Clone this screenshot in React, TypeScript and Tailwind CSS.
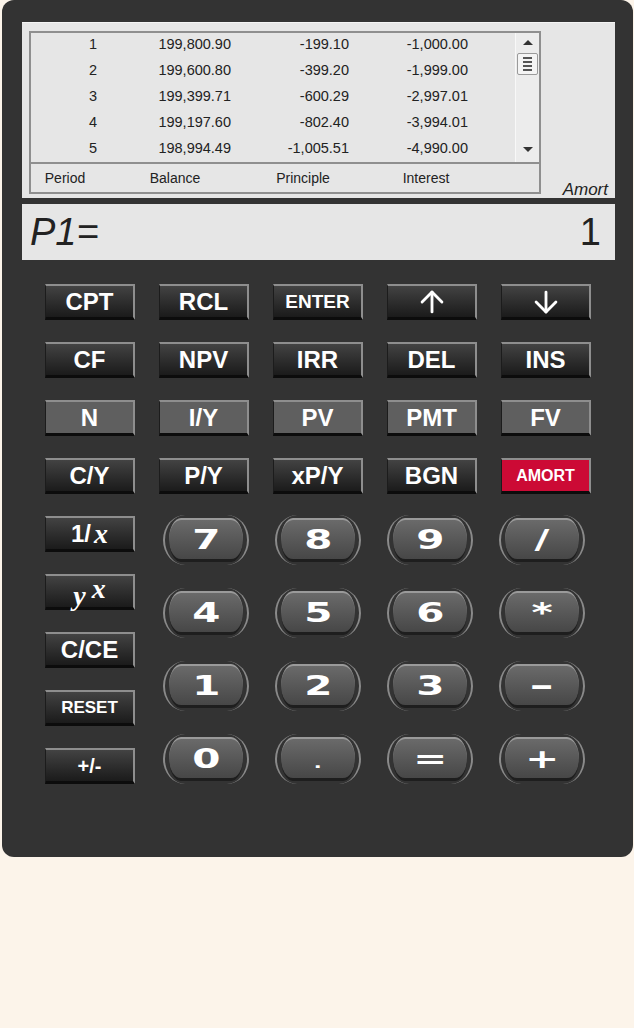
import { ArrowUp, ArrowDown } from 'lucide-react';
import type { ReactNode } from 'react';

const rows = [
  ['1', '199,800.90', '-199.10', '-1,000.00'],
  ['2', '199,600.80', '-399.20', '-1,999.00'],
  ['3', '199,399.71', '-600.29', '-2,997.01'],
  ['4', '199,197.60', '-802.40', '-3,994.01'],
  ['5', '198,994.49', '-1,005.51', '-4,990.00'],
];

type Variant = 'dark' | 'gray' | 'red';

function Key({ children, variant = 'dark', size = 'text-[24px]' }: { children: ReactNode; variant?: Variant; size?: string }) {
  const bg =
    variant === 'gray'
      ? 'bg-[#5f5f5f]'
      : variant === 'red'
        ? 'bg-[#cc0a35]'
        : 'bg-linear-to-b from-[#434343] to-[#1b1b1b]';
  return (
    <div
      className={`h-[36px] w-[90px] flex items-center justify-center text-white font-bold leading-none border-t-2 border-r-2 border-t-[#8e8e8e] border-r-[#8e8e8e] border-b-[3px] border-b-[#0c0c0c] border-l border-l-[#1c1c1c] ${bg} ${size}`}
    >
      {children}
    </div>
  );
}

function NumKey({ children }: { children: ReactNode }) {
  return (
    <div className="h-[50px] w-[86px] rounded-[22px/50%] border-x-2 border-x-[#8a8a8a] px-[4px] py-[3px] flex">
      <div className="flex-1 rounded-[12px/50%] border-t-2 border-t-[#9a9a9a] border-b-[3px] border-b-[#1e1e1e] bg-linear-to-b from-[#6a6a6a] to-[#474747] flex items-center justify-center">
        <span className="text-white font-bold text-[27px] leading-none scale-x-150 [font-family:'DejaVu_Sans',sans-serif]">
          {children}
        </span>
      </div>
    </div>
  );
}

export default function App() {
  return (
    <div className="min-h-[1028px] bg-[#fcf4ea] [font-family:'Liberation_Sans',Arial,sans-serif]">
      <div className="ml-[2px] w-[631px] h-[857px] bg-[#333333] rounded-[12px] pt-[22px]">
        {/* amortization panel */}
        <div className="ml-[20px] w-[593px] h-[176px] bg-[#e6e6e6] border-t border-t-[#f4f4f4] pl-[7px] pt-[8px] flex items-start">
          <div className="w-[512px] h-[163px] border-2 border-[#8f8f8f] flex flex-col text-[14.5px] text-[#222]">
            <div className="flex h-[131px] border-b-2 border-b-[#8f8f8f]">
              <div className="flex-1 -mt-[1px]">
                {rows.map((r) => (
                  <div key={r[0]} className="flex h-[26px] items-center">
                    <span className="w-[66px] text-right">{r[0]}</span>
                    <span className="w-[134px] text-right">{r[1]}</span>
                    <span className="w-[118px] text-right">{r[2]}</span>
                    <span className="w-[119px] text-right">{r[3]}</span>
                  </div>
                ))}
              </div>
              <div className="w-[24px] bg-[#ececec] border-l border-l-[#f8f8f8] flex flex-col items-center justify-between pt-[7px] pb-[10px]">
                <div className="flex flex-col items-center gap-[8px]">
                  <div className="w-0 h-0 border-x-[5px] border-x-transparent border-b-[5px] border-b-[#333]" />
                  <div className="w-[21px] h-[22px] border border-[#9a9a9a] bg-[#f4f4f4] rounded-[2px] flex flex-col items-center justify-center gap-[2px]">
                    <div className="w-[9px] h-[2px] bg-[#555]" />
                    <div className="w-[9px] h-[2px] bg-[#555]" />
                    <div className="w-[9px] h-[2px] bg-[#555]" />
                    <div className="w-[9px] h-[2px] bg-[#555]" />
                  </div>
                </div>
                <div className="w-0 h-0 border-x-[5px] border-x-transparent border-t-[5px] border-t-[#333]" />
              </div>
            </div>
            <div className="flex h-[28px] items-center text-[14px]">
              <span className="w-[68px] text-center">Period</span>
              <span className="w-[152px] text-center">Balance</span>
              <span className="w-[104px] text-center">Principle</span>
              <span className="w-[142px] text-center">Interest</span>
            </div>
          </div>
          <span className="self-end ml-auto mr-[7px] mb-[-4px] italic text-[17px] text-[#222]">Amort</span>
        </div>

        {/* display */}
        <div className="ml-[20px] mt-[6px] w-[593px] h-[56px] bg-[#e6e6e6] flex items-center justify-between pl-[8px] pr-[9px]">
          <span className="italic text-[38px] text-[#222] leading-none">P1=</span>
          <span className="text-[38px] text-[#222] leading-none mr-[5px]">1</span>
        </div>

        {/* function keys */}
        <div className="ml-[43px] mt-[24px] grid grid-cols-[repeat(5,90px)] gap-x-[24px] gap-y-[22px]">
          <Key>CPT</Key>
          <Key>RCL</Key>
          <Key size="text-[19px]">ENTER</Key>
          <Key><ArrowUp size={34} strokeWidth={2} /></Key>
          <Key><ArrowDown size={34} strokeWidth={2} /></Key>
          <Key>CF</Key>
          <Key>NPV</Key>
          <Key>IRR</Key>
          <Key>DEL</Key>
          <Key>INS</Key>
          <Key variant="gray">N</Key>
          <Key variant="gray">I/Y</Key>
          <Key variant="gray">PV</Key>
          <Key variant="gray">PMT</Key>
          <Key variant="gray">FV</Key>
          <Key>C/Y</Key>
          <Key>P/Y</Key>
          <Key>xP/Y</Key>
          <Key>BGN</Key>
          <Key variant="red" size="text-[16px]">AMORT</Key>
        </div>

        {/* lower section */}
        <div className="ml-[43px] mt-[22px] flex gap-[28px]">
          <div className="flex flex-col gap-[22px]">
            <Key>
              <span>1/</span>
              <span className="ml-[3px] italic font-bold text-[28px] [font-family:'Liberation_Serif',serif]">x</span>
            </Key>
            <Key>
              <span className="italic font-bold text-[28px] [font-family:'Liberation_Serif',serif] translate-y-[4px]">y</span>
              <span className="ml-[6px] italic font-bold text-[28px] [font-family:'Liberation_Serif',serif] -translate-y-[3px]">x</span>
            </Key>
            <Key>C/CE</Key>
            <Key size="text-[17px]">RESET</Key>
            <Key size="text-[20px]">+/-</Key>
          </div>
          <div className="grid grid-cols-[repeat(4,86px)] gap-x-[26px] gap-y-[23px] -mt-[1px]">
            <NumKey>7</NumKey>
            <NumKey>8</NumKey>
            <NumKey>9</NumKey>
            <NumKey>/</NumKey>
            <NumKey>4</NumKey>
            <NumKey>5</NumKey>
            <NumKey>6</NumKey>
            <NumKey>*</NumKey>
            <NumKey>1</NumKey>
            <NumKey>2</NumKey>
            <NumKey>3</NumKey>
            <NumKey><span className="inline-block scale-x-150">-</span></NumKey>
            <NumKey>0</NumKey>
            <NumKey><span className="text-[14px]">.</span></NumKey>
            <NumKey>=</NumKey>
            <NumKey>+</NumKey>
          </div>
        </div>
      </div>
    </div>
  );
}
